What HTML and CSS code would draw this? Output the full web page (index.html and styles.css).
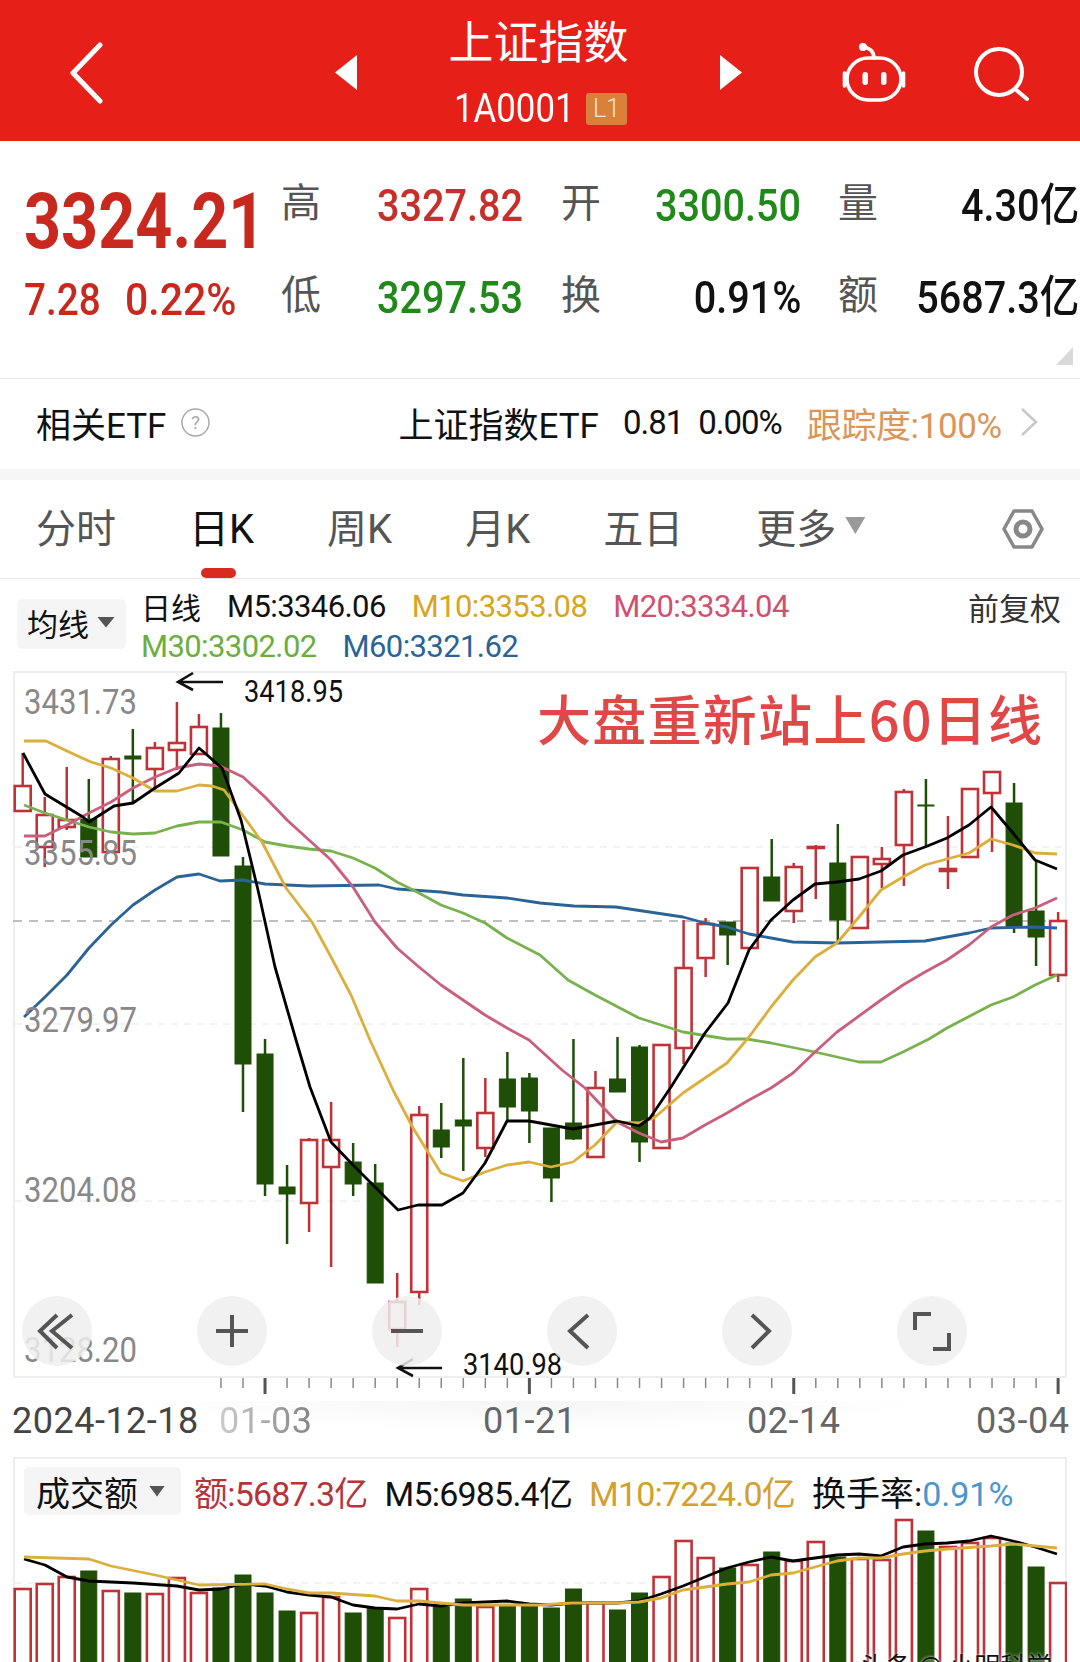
FILE: index.html
```html
<!DOCTYPE html>
<html lang="zh-CN">

<head>
    <meta charset="UTF-8">
    <meta name="viewport" content="width=device-width, initial-scale=1.0">
    <title>上证指数</title>
    <link rel="stylesheet" href="styles.css">
</head>

<body>
    <div class="page">
        <header class="top-bar">
            <svg class="back-icon" viewBox="0 0 36 64"><polyline points="33,4 6,32 33,60" /></svg>
            <div class="nav-center">
                <span class="tri tri-left"></span>
                <div class="title-col">
                    <div class="title">上证指数</div>
                    <div class="code-row">
                        <span class="code">1A0001</span>
                        <span class="badge">L1</span>
                    </div>
                </div>
                <span class="tri tri-right"></span>
            </div>
            <svg class="robot-icon" viewBox="0 0 64 62">
                <rect x="5" y="16" width="54" height="42" rx="21" />
                <path d="M2.5 31v13M61.5 31v13M32 16C32 10 28 6 21 5" />
                <circle class="fill" cx="21" cy="5" r="4" />
                <rect class="fill" x="20.5" y="30" width="5.5" height="13" rx="2.7" />
                <rect class="fill" x="39" y="30" width="5.5" height="13" rx="2.7" />
            </svg>
            <svg class="search-icon" viewBox="0 0 58 58">
                <circle cx="26" cy="28" r="23" />
                <path d="M42 45l12 10" />
            </svg>
        </header>

        <section class="quote">
            <div class="quote-main">
                <div class="price">3324.21</div>
                <div class="change">
                    <span class="change-val">7.28</span>
                    <span class="change-pct">0.22%</span>
                </div>
            </div>
            <div class="stats">
                <span class="label">高</span><span class="val red"><span class="n">3327.82</span></span>
                <span class="label">开</span><span class="val green"><span class="n">3300.50</span></span>
                <span class="label">量</span><span class="val"><span class="n">4.30亿</span></span>
                <span class="label">低</span><span class="val green"><span class="n">3297.53</span></span>
                <span class="label">换</span><span class="val"><span class="n">0.91%</span></span>
                <span class="label">额</span><span class="val"><span class="n">5687.3亿</span></span>
            </div>
            <span class="corner"></span>
        </section>

        <section class="etf">
            <span class="etf-title">相关ETF</span>
            <svg class="help-icon" viewBox="0 0 29 29">
                <circle cx="14.5" cy="14.5" r="13.5" />
                <text x="14.5" y="21">?</text>
            </svg>
            <span class="etf-name">上证指数ETF</span>
            <span class="etf-num">0.81</span>
            <span class="etf-num etf-pct">0.00%</span>
            <span class="etf-track">跟踪度:100%</span>
            <svg class="etf-arrow" viewBox="0 0 18 30"><polyline points="2,2 16,15 2,28" /></svg>
        </section>

        <div class="band"></div>

        <nav class="tabs">
            <span class="tab">分时</span>
            <span class="tab active">日K</span>
            <span class="tab">周K</span>
            <span class="tab">月K</span>
            <span class="tab">五日</span>
            <span class="tab more">更多<i class="tab-caret"></i></span>
            <svg class="hex-icon" viewBox="0 0 42 42">
                <path d="M12 3h18l10 18-10 18H12L2 21z" />
                <circle cx="21" cy="21" r="7" />
            </svg>
        </nav>

        <section class="legend">
            <div class="selector ma-selector">均线<i class="caret"></i></div>
            <div class="legend-lines">
                <div class="legend-row">
                    <span class="legend-name">日线</span>
                    <span class="ma m5">M5:3346.06</span>
                    <span class="ma m10">M10:3353.08</span>
                    <span class="ma m20">M20:3334.04</span>
                    <span class="adjust">前复权</span>
                </div>
                <div class="legend-row">
                    <span class="ma m30">M30:3302.02</span>
                    <span class="ma m60">M60:3321.62</span>
                </div>
            </div>
        </section>

        <section class="chart">
            <svg id="kline" class="chart-svg" viewBox="13 671 1054 707"></svg>
            <div class="chart-btns">
                <button class="round-btn"><svg viewBox="0 0 70 70"><path d="M35 19L18 35l17 17M50 19L30 35l20 17" /></svg></button>
                <button class="round-btn"><svg viewBox="0 0 70 70"><path d="M35 19v32M19 35h32" /></svg></button>
                <button class="round-btn"><svg viewBox="0 0 70 70"><path d="M19 35h32" /></svg></button>
                <button class="round-btn"><svg viewBox="0 0 70 70"><path d="M41 19L23 35l18 17" /></svg></button>
                <button class="round-btn"><svg viewBox="0 0 70 70"><path d="M30 19l17 16-17 17" /></svg></button>
                <button class="round-btn"><svg viewBox="0 0 70 70"><path d="M18 34V18h16M52 37v16H36" /></svg></button>
            </div>
        </section>

        <div class="axis">
            <svg id="ticks" class="ticks" viewBox="13 1378 1054 17"></svg>
            <div class="dates">
                <span class="date-first">2024-12-18</span>
                <span class="date-fade">01-03</span>
                <span>01-21</span>
                <span>02-14</span>
                <span>03-04</span>
            </div>
        </div>

        <section class="volume">
            <div class="vol-head">
                <div class="selector vol-selector">成交额<i class="caret"></i></div>
                <span class="vol-item vol-red">额:5687.3亿</span>
                <span class="vol-item vol-black">M5:6985.4亿</span>
                <span class="vol-item vol-yellow">M10:7224.0亿</span>
                <span class="vol-item vol-turnover">换手率:<span class="vol-blue">0.91%</span></span>
            </div>
            <svg id="bars" class="vol-svg" viewBox="13 1517 1054 145"></svg>
            <span class="watermark">头条 @ 小明科学</span>
        </section>
    </div>

    <script src="script.js"></script>
</body>

</html>
```

FILE: styles.css
```css
* {
    box-sizing: border-box;
}

body {
    margin: 0;
    background: #fff;
    font-family: Roboto, "Noto Sans CJK SC", sans-serif;
    color: #111;
}

.page {
    position: relative;
    width: 1080px;
    height: 1662px;
    overflow: hidden;
}

/* top bar */
.top-bar {
    display: flex;
    align-items: center;
    height: 141px;
    padding: 4px 0 0 67px;
    background: #e61f19;
    color: #fff;
}

.top-bar svg {
    flex: none;
    fill: none;
    stroke: #fff;
}

.back-icon {
    width: 36px;
    height: 64px;
    stroke-width: 5;
    stroke-linecap: round;
    stroke-linejoin: round;
}

.nav-center {
    display: flex;
    align-items: center;
    justify-content: space-between;
    width: 407px;
    margin-left: 232px;
}

.tri {
    width: 22px;
    height: 35px;
    background: #fff;
}

.tri-left {
    clip-path: polygon(100% 0, 0 50%, 100% 100%);
}

.tri-right {
    clip-path: polygon(0 0, 100% 50%, 0 100%);
}

.title-col {
    display: flex;
    flex-direction: column;
    align-items: center;
    margin-top: 1px;
}

.title {
    font-size: 45px;
    line-height: 52px;
}

.code-row {
    display: flex;
    align-items: center;
    margin-top: 19px;
    margin-left: 4px;
}

.code {
    width: 120px;
    font-size: 40px;
    line-height: 40px;
    white-space: nowrap;
    transform: scaleX(.87);
    transform-origin: left center;
}

.badge {
    width: 41px;
    height: 32px;
    margin-left: 12px;
    border-radius: 3px;
    background: #d9813b;
    color: #fbe6c8;
    font-size: 25px;
    font-weight: 300;
    line-height: 32px;
    text-align: center;
}

.robot-icon {
    width: 64px;
    height: 62px;
    margin-left: 100px;
    stroke-width: 3.6;
    stroke-linecap: round;
}

.robot-icon .fill {
    fill: #fff;
    stroke: none;
}

.search-icon {
    width: 58px;
    height: 58px;
    margin-left: 67px;
    stroke-width: 4;
    stroke-linecap: round;
}

/* quote block */
.quote {
    position: relative;
    display: flex;
    height: 238px;
    border-bottom: 1px solid #eaeaea;
}

.quote-main {
    width: 281px;
    padding: 43px 0 0 24px;
    flex: none;
    color: #c8291f;
}

.price {
    width: 237px;
    font-size: 77px;
    font-weight: 700;
    line-height: 76px;
    white-space: nowrap;
    transform: scaleX(.84);
    transform-origin: left center;
}

.change {
    display: flex;
    gap: 27px;
    margin-top: 17px;
    font-size: 45px;
    font-weight: 500;
    line-height: 46px;
}

.change-val {
    width: 74px;
    transform: scaleX(.86);
    transform-origin: left center;
}

.change-pct {
    width: 109px;
    transform: scaleX(.91);
    transform-origin: left center;
}

.stats {
    display: grid;
    grid-template-columns: 40px 202px 78px 200px 77px 201px;
    grid-auto-rows: 46px;
    row-gap: 46px;
    padding-top: 42px;
    align-items: center;
}

.label {
    margin-top: -4px;
    color: #555;
    font-size: 40px;
    line-height: 46px;
    text-align: right;
}

.val {
    font-size: 45px;
    font-weight: 500;
    line-height: 46px;
    text-align: right;
    white-space: nowrap;
}

.n {
    display: inline-block;
    transform: scaleX(.88);
    transform-origin: right center;
}

.red {
    color: #c6302b;
}

.green {
    color: #1f8a1a;
}

.corner {
    position: absolute;
    left: 1056px;
    top: 206px;
    width: 17px;
    height: 18px;
    background: #d9d9d9;
    clip-path: polygon(100% 0, 100% 100%, 0 100%);
}

/* related etf row */
.etf {
    display: flex;
    align-items: center;
    height: 90px;
    padding: 0 0 4px 36px;
    white-space: nowrap;
}

.etf-title {
    font-size: 35px;
}

.help-icon {
    width: 29px;
    height: 29px;
    margin-left: 15px;
    fill: none;
    stroke: #aaa;
    stroke-width: 1.5;
}

.help-icon text {
    fill: #aaa;
    stroke: none;
    font-size: 19px;
    text-anchor: middle;
}

.etf-name {
    margin-left: 188px;
    font-size: 35px;
}

.etf-num {
    margin-left: 24px;
    font-size: 33px;
    letter-spacing: -1px;
}

.etf-pct {
    margin-left: 15px;
}

.etf-track {
    margin-left: 25px;
    color: #dc9558;
    font-size: 35px;
    letter-spacing: -.4px;
}

.etf-arrow {
    width: 18px;
    height: 30px;
    margin-left: 18px;
    fill: none;
    stroke: #c8c8c8;
    stroke-width: 2.5;
}

.band {
    height: 11px;
    background: #f6f6f6;
}

/* period tabs */
.tabs {
    display: flex;
    align-items: center;
    gap: 73px;
    height: 99px;
    padding: 0 36px 7px 36px;
    border-bottom: 1px solid #e6e6e6;
}

.tab {
    position: relative;
    color: #555;
    font-size: 40px;
    white-space: nowrap;
}

.active {
    color: #111;
}

.active::after {
    content: "";
    position: absolute;
    left: 12px;
    bottom: -23px;
    width: 35px;
    height: 10px;
    border-radius: 5px;
    background: #d92a20;
}

.more {
    display: flex;
    align-items: center;
}

.tab-caret {
    width: 20px;
    height: 17px;
    margin-left: 9px;
    background: #999;
    clip-path: polygon(0 0, 100% 0, 50% 100%);
}

.hex-icon {
    width: 42px;
    height: 42px;
    margin-left: auto;
    margin-top: 6px;
    fill: none;
    stroke: #888;
    stroke-width: 3.6;
    stroke-linejoin: round;
}

.hex-icon circle {
    stroke-width: 5;
}

/* moving average legend */
.legend {
    display: flex;
    align-items: flex-start;
    height: 92px;
    padding: 9px 19px 0 17px;
}

.selector {
    display: flex;
    align-items: center;
    border-radius: 5px;
    background: #f5f5f5;
    color: #111;
}

.ma-selector {
    flex: none;
    width: 109px;
    height: 50px;
    margin-top: 11px;
    padding: 0 0 4px 10px;
    font-size: 31px;
}

.caret {
    width: 18px;
    height: 11px;
    margin-left: 8px;
    background: #555;
    clip-path: polygon(0 0, 100% 0, 50% 100%);
}

.legend-lines {
    flex: 1;
    margin-left: 15px;
}

.legend-row {
    display: flex;
    align-items: center;
    gap: 26px;
    height: 36px;
    margin-bottom: 4px;
    white-space: nowrap;
}

.legend-name {
    font-size: 30px;
}

.ma {
    font-size: 31px;
    letter-spacing: -.6px;
}

.adjust {
    margin-left: auto;
    color: #333;
    font-size: 31px;
}

.m5 {
    color: #111;
}

.m10 {
    color: #d9a41f;
}

.m20 {
    color: #d1506e;
}

.m30 {
    color: #6cae3e;
}

.m60 {
    color: #2a6496;
}

/* k-line chart */
.chart {
    position: relative;
    height: 707px;
    margin: 0 13px;
    box-shadow: inset 0 0 0 2px #eee;
}

.chart-svg {
    display: block;
    width: 1054px;
    height: 707px;
    overflow: visible;
}

.chart-btns {
    position: absolute;
    left: 9px;
    top: 625px;
    display: flex;
    gap: 105px;
}

.round-btn {
    width: 70px;
    height: 70px;
    padding: 0;
    border: none;
    border-radius: 50%;
    background: rgba(238, 238, 238, .85);
}

.round-btn svg {
    display: block;
    width: 70px;
    height: 70px;
    fill: none;
    stroke: #555;
    stroke-width: 4;
}

.axis {
    height: 79px;
}

.ticks {
    display: block;
    width: 1054px;
    height: 17px;
    margin-left: 13px;
}

.dates {
    display: grid;
    grid-template-columns: 207px 264px 264px 229px auto;
    margin-top: 6px;
    padding-left: 12px;
    color: #666;
    font-size: 36px;
    letter-spacing: .5px;
    line-height: 40px;
    background: radial-gradient(ellipse 400px 30px at 530px 0, #f5f5f5, rgba(245, 245, 245, 0));
}

.date-first {
    color: #444;
}

.date-fade {
    background: linear-gradient(to right, #ccc, #666 50%);
    -webkit-background-clip: text;
    background-clip: text;
    -webkit-text-fill-color: transparent;
}

/* volume panel */
.volume {
    position: relative;
    margin: 0 13px;
    height: 205px;
    box-shadow: inset 0 2px #eee, inset 2px 0 #eee, inset -2px 0 #eee;
}

.vol-head {
    display: flex;
    align-items: center;
    height: 60px;
    padding: 10px 0 2px 11px;
    white-space: nowrap;
}

.vol-selector {
    width: 157px;
    height: 48px;
    margin-right: 13px;
    padding-left: 12px;
    font-size: 34px;
}

.vol-selector .caret {
    width: 16px;
    margin-left: 11px;
}

.vol-item {
    margin-right: 17px;
    font-size: 34px;
    letter-spacing: -.8px;
}

.vol-red {
    color: #b5343a;
}

.vol-yellow {
    color: #d2a02e;
}

.vol-black {
    color: #111;
}

.vol-turnover {
    color: #111;
    letter-spacing: 0;
}

.vol-blue {
    color: #4a96cc;
}

.vol-svg {
    display: block;
    width: 1054px;
    height: 145px;
}

.watermark {
    position: absolute;
    left: 847px;
    top: 192px;
    color: #111;
    font-size: 26px;
    line-height: 36px;
    white-space: nowrap;
    text-shadow: 0 0 3px #fff;
}

/* svg parts made in script.js */
.wick {
    stroke-width: 2.5;
}

.up {
    fill: #fff;
    stroke: #bf3238;
    stroke-width: 2.6;
}

.down {
    fill: #1f4f07;
    stroke: #1f4f07;
}

.line {
    fill: none;
    stroke-width: 2.8;
    stroke-linejoin: round;
}

.grid {
    stroke: #e6e6e6;
    stroke-width: 1;
    stroke-dasharray: 7 6;
}

.grid-mid {
    stroke: #aaa;
    stroke-width: 1.5;
    stroke-dasharray: 9 7;
}

.y-label {
    fill: #888;
    font-size: 35px;
}

.mark {
    fill: #111;
    font-size: 32px;
}

.arrow {
    fill: none;
    stroke: #111;
    stroke-width: 2.6;
}

.note {
    fill: #e04848;
    font-family: "Noto Sans CJK SC", sans-serif;
    font-size: 54px;
    font-weight: 500;
}

.tick {
    stroke: #888;
    stroke-width: 1.5;
}

.tick-major {
    stroke: #555;
    stroke-width: 3;
}
```

FILE: script.js
```js
const NS = 'http://www.w3.org/2000/svg';
const X0 = 22.7;
const STEP = 22.03;

// type, high, body top, body bottom, low (page y)
const candles = [
    ['u', 753, 786, 811, 811], ['u', 797, 815, 847, 867], ['u', 767, 820, 827, 830], ['d', 779, 819, 857, 857],
    ['u', 756, 759, 852, 852], ['d', 729, 756, 759, 803], ['u', 742, 748, 769, 790], ['u', 702, 743, 750, 770],
    ['u', 714, 727, 754, 754], ['d', 713, 728, 856, 856], ['d', 857, 866, 1064, 1112], ['d', 1039, 1054, 1184, 1196],
    ['d', 1165, 1187, 1194, 1244], ['u', 1138, 1140, 1203, 1232], ['u', 1102, 1140, 1167, 1267], ['d', 1143, 1162, 1184, 1196],
    ['d', 1164, 1183, 1283, 1283], ['u', 1273, 1302, 1329, 1347], ['u', 1106, 1115, 1292, 1305], ['d', 1103, 1130, 1147, 1158],
    ['d', 1058, 1120, 1126, 1171], ['u', 1078, 1113, 1148, 1157], ['d', 1052, 1079, 1107, 1122], ['d', 1073, 1078, 1111, 1143],
    ['d', 1128, 1128, 1178, 1202], ['d', 1039, 1123, 1139, 1140], ['u', 1071, 1088, 1157, 1158], ['d', 1037, 1079, 1092, 1092],
    ['d', 1045, 1047, 1142, 1162], ['u', 1044, 1045, 1148, 1149], ['u', 920, 968, 1048, 1064], ['u', 918, 924, 958, 977],
    ['d', 922, 922, 935, 965], ['u', 868, 868, 948, 948], ['d', 839, 877, 901, 901], ['u', 863, 867, 911, 923],
    ['u', 845, 847, 848, 899], ['d', 824, 863, 920, 943], ['u', 856, 857, 928, 928], ['u', 847, 859, 864, 888],
    ['u', 789, 792, 845, 886], ['d', 779, 805, 806, 847], ['u', 816, 869, 871, 889], ['u', 789, 789, 857, 857],
    ['u', 771, 772, 793, 852], ['d', 783, 803, 927, 933], ['d', 860, 911, 937, 966], ['u', 912, 921, 975, 982]
];

const volumes = [
    ['u', 1589], ['u', 1584], ['u', 1577], ['d', 1571], ['u', 1591], ['d', 1593], ['u', 1594], ['u', 1578],
    ['u', 1593], ['d', 1588], ['d', 1575], ['d', 1593], ['d', 1611], ['u', 1613], ['u', 1597], ['d', 1613],
    ['d', 1608], ['u', 1618], ['u', 1589], ['d', 1607], ['d', 1599], ['u', 1607], ['d', 1605], ['d', 1605],
    ['d', 1608], ['d', 1589], ['u', 1603], ['d', 1610], ['d', 1593], ['u', 1577], ['u', 1541], ['u', 1558],
    ['d', 1568], ['u', 1565], ['d', 1552], ['u', 1561], ['u', 1542], ['d', 1557], ['u', 1559], ['u', 1560],
    ['u', 1520], ['d', 1531], ['u', 1547], ['u', 1543], ['u', 1538], ['d', 1543], ['d', 1567], ['u', 1583]
];

const maLines = [
    ['#2a6496', '24,1017 45,997 67,975 89,948 111,925 133,905 155,890 177,877 199,874 220,881 243,880 265,884 309,886 379,885 397,889 441,892 463,895 507,898 540,903 574,906 616,907 683,917 705,923 727,927 749,934 771,938 793,942 837,943 925,941 969,933 991,928 1035,927 1057,928'],
    ['#78b24e', '24,805 45,813 67,820 89,827 111,832 133,834 155,833 177,826 199,822 221,822 243,830 265,842 287,846 309,849 331,851 353,858 375,868 397,882 419,893 441,905 463,913 485,923 507,938 540,955 568,980 595,995 639,1018 683,1032 727,1039 747,1039 771,1043 815,1052 859,1062 881,1062 903,1052 929,1039 947,1028 991,1005 1013,997 1035,985 1057,975'],
    ['#c95f7c', '24,836 45,836 67,825 89,813 111,802 133,788 155,777 177,768 199,764 220,766 243,777 265,797 287,820 309,840 331,860 353,887 375,922 397,948 419,967 441,985 463,1000 485,1015 507,1028 529,1040 540,1050 562,1070 585,1088 617,1122 639,1133 661,1142 683,1138 705,1125 727,1113 749,1100 771,1088 793,1073 815,1052 837,1032 881,1000 903,985 925,972 947,960 969,945 991,927 1013,915 1035,908 1057,898'],
    ['#dcae3c', '24,741 46,741 69,752 91,762 111,768 133,778 155,791 177,791 199,785 212,786 224,790 241,813 262,842 286,888 312,922 331,957 351,995 370,1040 393,1090 413,1128 441,1173 463,1181 485,1172 507,1165 529,1162 551,1167 573,1162 595,1145 617,1122 639,1123 654,1118 683,1093 727,1063 749,1037 771,1007 793,980 815,957 837,943 859,917 881,890 903,877 925,865 947,859 969,853 991,839 1013,845 1035,853 1057,854'],
    ['#000', '23,753 45,794 83,817 89,822 114,806 133,803 155,788 179,773 199,748 222,768 241,820 258,890 275,967 296,1040 310,1087 331,1142 353,1165 375,1187 398,1210 418,1205 442,1205 463,1193 485,1163 507,1121 529,1121 540,1123 573,1129 595,1125 617,1121 639,1126 650,1118 671,1087 688,1060 705,1033 728,1003 749,950 771,920 793,900 815,884 837,882 859,879 881,871 903,855 925,847 947,838 969,825 991,807 1013,833 1035,860 1057,869']
];

const volLines = [
    ['#000', '24,1559 45,1565 67,1577 89,1581 133,1583 177,1586 199,1590 221,1589 243,1584 265,1586 287,1592 309,1595 331,1597 353,1605 375,1608 397,1609 419,1604 441,1606 463,1603 485,1602 507,1601 529,1604 551,1605 573,1603 595,1603 617,1603 639,1601 661,1594 683,1586 705,1577 727,1568 749,1562 771,1557 793,1561 815,1558 837,1555 859,1554 881,1556 903,1547 925,1544 947,1543 969,1541 991,1536 1013,1541 1035,1547 1057,1554'],
    ['#dcae3c', '24,1557 89,1559 111,1566 155,1575 177,1580 199,1585 265,1584 287,1589 309,1593 331,1593 375,1596 397,1601 419,1601 441,1603 463,1605 540,1605 573,1603 617,1603 639,1602 661,1598 683,1590 727,1584 749,1582 771,1575 793,1573 815,1567 837,1561 859,1558 881,1558 903,1554 925,1551 947,1549 991,1546 1013,1544 1057,1548']
];

function add(parent, tag, attrs, text) {
    const el = document.createElementNS(NS, tag);
    for (const key in attrs) {
        el.setAttribute(key, attrs[key]);
    }
    if (text) {
        el.textContent = text;
    }
    parent.appendChild(el);
    return el;
}

function drawPolylines(svg, lines) {
    lines.forEach(function (line) {
        add(svg, 'polyline', { class: 'line', stroke: line[0], points: line[1] });
    });
}

function drawKline() {
    const svg = document.getElementById('kline');

    [847, 1024, 1201].forEach(function (y) {
        add(svg, 'line', { class: 'grid', x1: 15, x2: 1065, y1: y, y2: y });
    });
    add(svg, 'line', { class: 'grid-mid', x1: 13, x2: 1067, y1: 921, y2: 921 });

    candles.forEach(function (c, i) {
        const x = X0 + STEP * i;
        const color = c[0] === 'u' ? '#bf3238' : '#1f4f07';
        add(svg, 'line', { class: 'wick', stroke: color, x1: x, x2: x, y1: c[1], y2: c[4] });
        add(svg, 'rect', {
            class: c[0] === 'u' ? 'up' : 'down',
            x: x - 8,
            y: c[2],
            width: 16,
            height: c[3] - c[2]
        });
    });

    drawPolylines(svg, maLines);

    [['3431.73', 714], ['3355.85', 865], ['3279.97', 1032], ['3204.08', 1202], ['3128.20', 1362]].forEach(function (item) {
        add(svg, 'text', { class: 'y-label', x: 24, y: item[1], textLength: 113, lengthAdjust: 'spacingAndGlyphs' }, item[0]);
    });

    add(svg, 'path', { class: 'arrow', d: 'M223 682H178M193 673l-15 9 15 8' });
    add(svg, 'text', { class: 'mark', x: 244, y: 702, textLength: 99, lengthAdjust: 'spacingAndGlyphs' }, '3418.95');
    add(svg, 'path', { class: 'arrow', d: 'M442 1368H398M413 1359l-15 9 15 8' });
    add(svg, 'text', { class: 'mark', x: 463, y: 1375, textLength: 99, lengthAdjust: 'spacingAndGlyphs' }, '3140.98');

    add(svg, 'text', { class: 'note', x: 537, y: 741, textLength: 505 }, '大盘重新站上60日线');
}

function drawTicks() {
    const svg = document.getElementById('ticks');
    for (let i = 9; i < candles.length; i++) {
        const x = X0 + STEP * i;
        const major = [11, 23, 35, 47].indexOf(i) !== -1;
        add(svg, 'line', { class: major ? 'tick-major' : 'tick', x1: x, x2: x, y1: 1378, y2: major ? 1394 : 1388 });
    }
}

function drawVolume() {
    const svg = document.getElementById('bars');
    add(svg, 'line', { class: 'grid', x1: 15, x2: 1065, y1: 1583, y2: 1583 });
    volumes.forEach(function (v, i) {
        const x = X0 + STEP * i;
        add(svg, 'rect', {
            class: v[0] === 'u' ? 'up' : 'down',
            x: x - 8,
            y: v[1],
            width: 16,
            height: 1700 - v[1]
        });
    });
    drawPolylines(svg, volLines);
}

drawKline();
drawTicks();
drawVolume();
```
